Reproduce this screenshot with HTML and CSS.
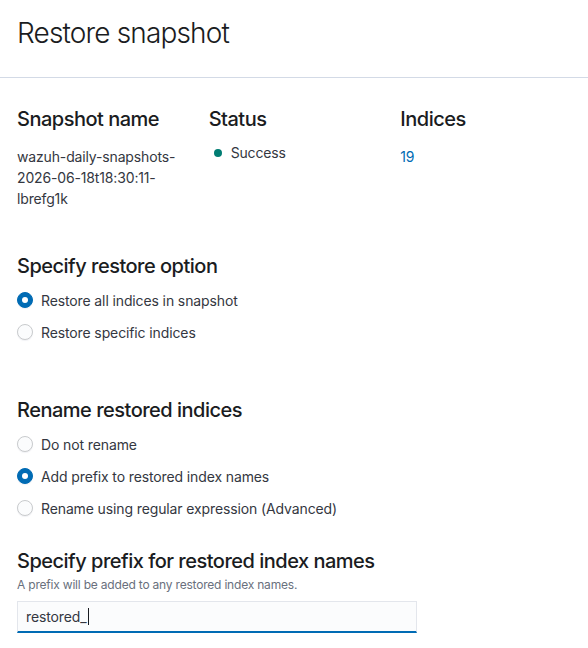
FILE: index.html
```html
<!DOCTYPE html>
<html lang="en">
<head>
<meta charset="utf-8">
<title>Restore snapshot</title>
<link rel="stylesheet" href="styles.css">
</head>
<body>
<header class="flyout-header">
  <h1 class="title-l">Restore snapshot</h1>
</header>
<main class="flyout-body">
  <section class="summary">
    <div class="summary-col">
      <h2 class="title-s">Snapshot name</h2>
      <p class="value">wazuh-daily-snapshots-2026-06-18t18:30:11-lbrefg1k</p>
    </div>
    <div class="summary-col">
      <h2 class="title-s">Status</h2>
      <p class="value health"><span class="health-dot"></span>Success</p>
    </div>
    <div class="summary-col">
      <h2 class="title-s">Indices</h2>
      <p class="value"><a class="link" href="#">19</a></p>
    </div>
  </section>

  <section class="group group-restore">
    <h2 class="title-s">Specify restore option</h2>
    <div class="radio-group">
      <label class="radio"><span class="radio-box checked"></span>Restore all indices in snapshot</label>
      <label class="radio"><span class="radio-box"></span>Restore specific indices</label>
    </div>
  </section>

  <section class="group group-rename">
    <h2 class="title-s">Rename restored indices</h2>
    <div class="radio-group">
      <label class="radio"><span class="radio-box"></span>Do not rename</label>
      <label class="radio"><span class="radio-box checked"></span>Add prefix to restored index names</label>
      <label class="radio"><span class="radio-box"></span>Rename using regular expression (Advanced)</label>
    </div>
  </section>

  <section class="group group-prefix">
    <h2 class="title-s">Specify prefix for restored index names</h2>
    <p class="help">A prefix will be added to any restored index names.</p>
    <div class="field" role="textbox" aria-label="Prefix">restored_<span class="caret"></span></div>
  </section>
</main>
</body>
</html>
```

FILE: styles.css
```css
* { box-sizing: border-box; }

html, body {
  margin: 0;
  padding: 0;
  background: #ffffff;
}

body {
  font-family: Inter, "Noto Sans", "Liberation Sans", sans-serif;
  color: #343741;
  font-size: 14px;
  line-height: 21px;
}

.flyout-header {
  padding: 16px 16px 27px 17px;
  border-bottom: 1px solid #d3dae6;
}

.title-l {
  margin: 0;
  font-size: 28px;
  line-height: 34px;
  font-weight: 300;
  color: #1a1c21;
  letter-spacing: -0.85px;
}

.flyout-body {
  padding: 29px 16px 0 17px;
}

.title-s {
  margin: 0;
  font-size: 20px;
  line-height: 24px;
  font-weight: 500;
  color: #1a1c21;
  letter-spacing: -0.5px;
}

.summary {
  display: grid;
  grid-template-columns: repeat(3, 1fr);
  column-gap: 20px;
}

.value {
  margin: 15px 0 0;
  font-size: 14px;
  line-height: 21px;
  color: #343741;
  letter-spacing: -0.15px;
}

.health {
  display: flex;
  align-items: center;
  margin-top: 11px;
}

.health-dot {
  width: 8px;
  height: 8px;
  border-radius: 50%;
  background: #017d73;
  margin: 0 9px 0 5px;
  flex: none;
}

.link {
  color: #006bb4;
  text-decoration: none;
}

.group-restore { margin-top: 45px; }
.group-rename { margin-top: 54px; }
.group-prefix { margin-top: 29px; }

.radio-group {
  display: flex;
  flex-direction: column;
  gap: 8px;
  margin-top: 10px;
}

.radio {
  display: flex;
  align-items: center;
  height: 24px;
  font-size: 14px;
  color: #343741;
  letter-spacing: -0.12px;
}

.radio-box {
  width: 16px;
  height: 16px;
  border-radius: 50%;
  border: 1px solid #c9cbcd;
  background: #fbfcfd;
  box-shadow: 0 1px 1px rgba(152, 162, 179, 0.15);
  margin-right: 8px;
  flex: none;
  display: flex;
  align-items: center;
  justify-content: center;
}

.radio-box.checked {
  background: #006bb4;
  border-color: #006bb4;
}

.radio-box.checked::after {
  content: "";
  width: 6px;
  height: 6px;
  border-radius: 50%;
  background: #ffffff;
}

.help {
  margin: 4px 0 8px;
  font-size: 12px;
  line-height: 16px;
  color: #69707d;
  letter-spacing: -0.2px;
}

.field {
  display: flex;
  align-items: center;
  max-width: 400px;
  height: 32px;
  padding: 0 8px;
  background: #fbfcfd;
  border: 1px solid #e3e6ec;
  border-bottom: 2px solid #006bb4;
  font-size: 14px;
  color: #343741;
  letter-spacing: -0.12px;
}

.caret {
  display: inline-block;
  width: 1px;
  height: 17px;
  background: #1a1c21;
  margin-left: 1px;
}
```
